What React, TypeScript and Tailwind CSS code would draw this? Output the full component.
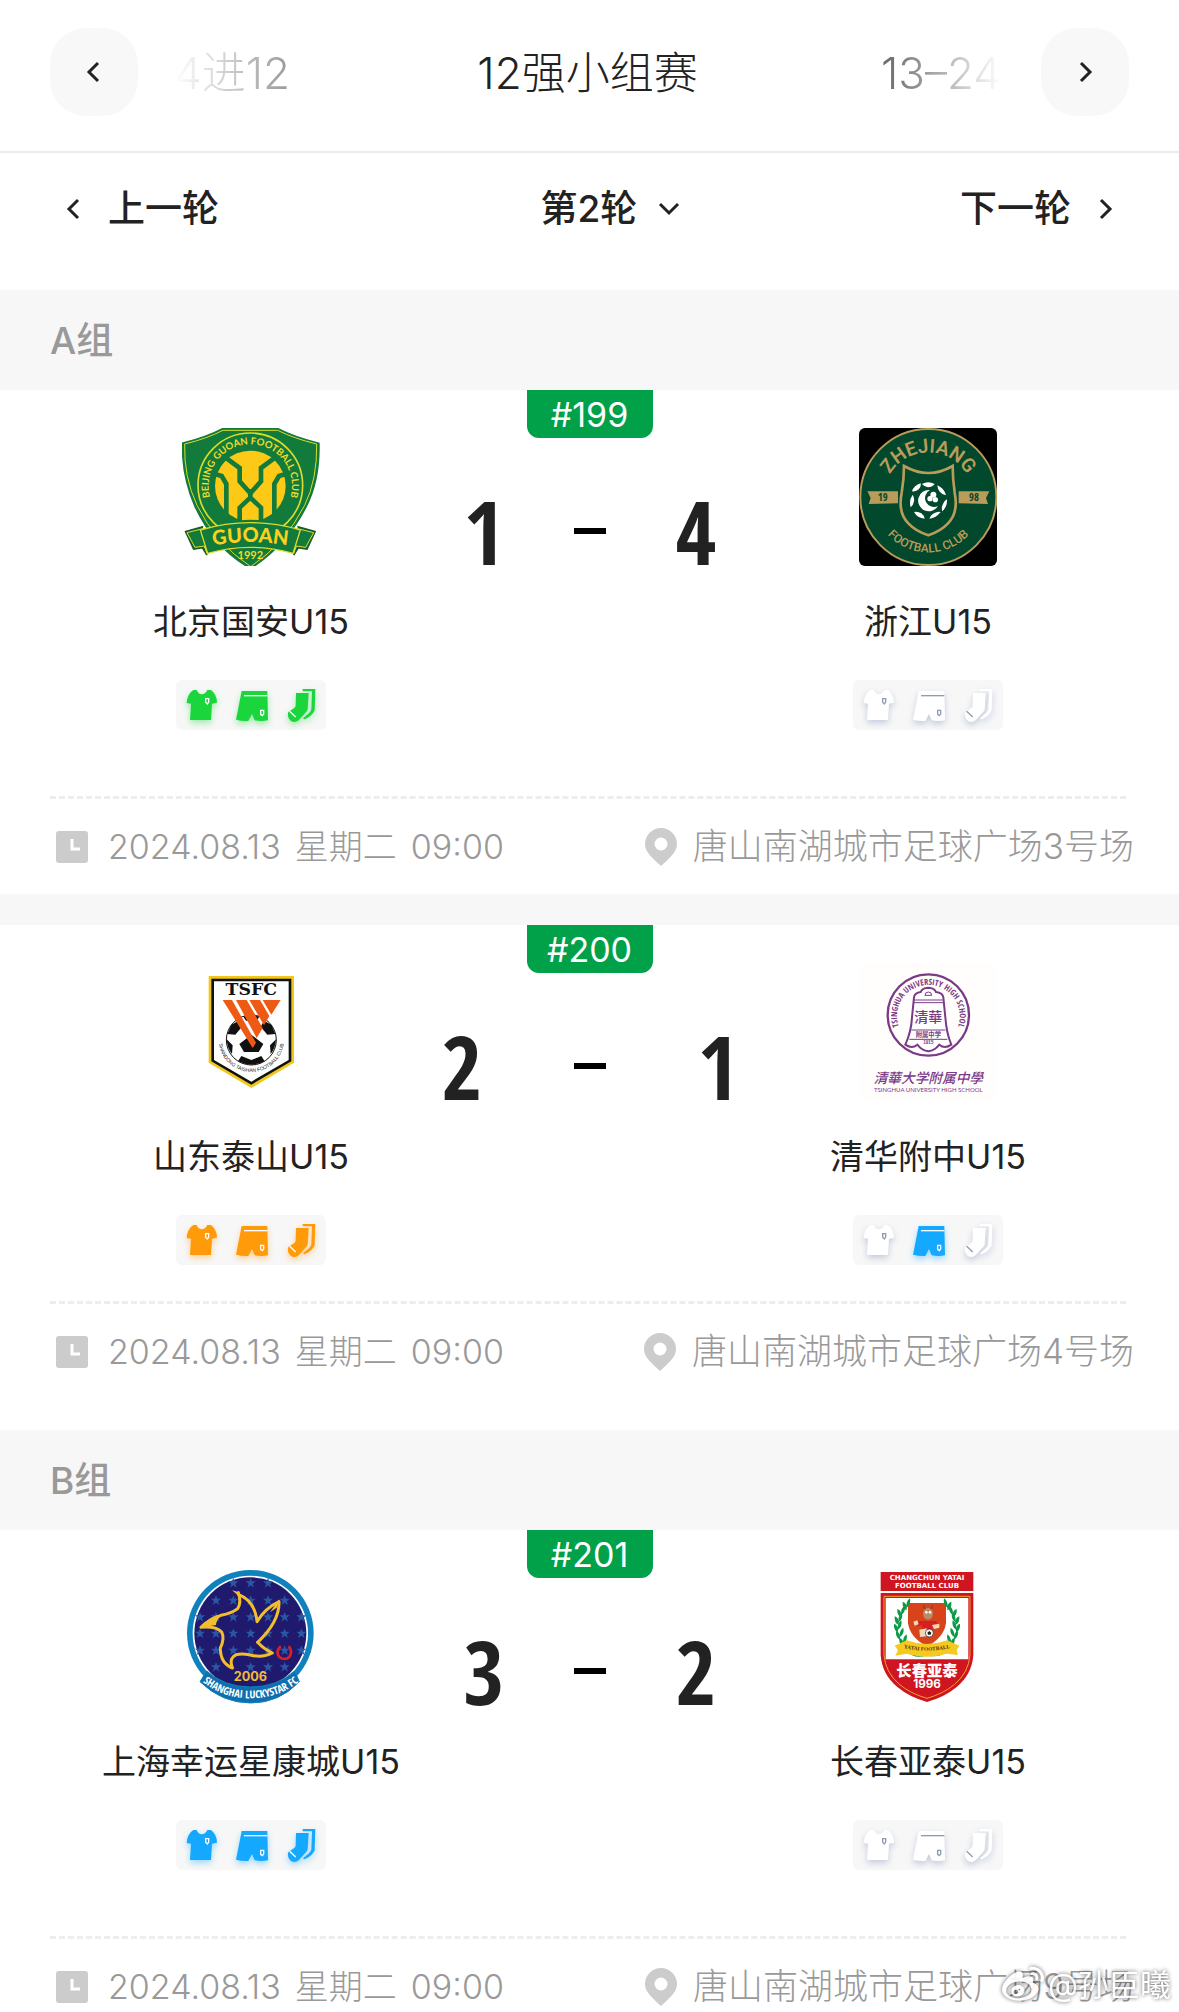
import React from 'react';
import { FaWeibo } from 'react-icons/fa';

type KitColor = 'green' | 'orange' | 'blue' | 'white';

interface Team {
  name: string;
  crest: React.FC;
  kit: [KitColor, KitColor, KitColor];
}

interface Match {
  id: string;
  home: Team;
  away: Team;
  score: [number, number];
  date: string;
  weekday: string;
  time: string;
  venue: string;
  scoreGap: string;
  detailGap: string;
}

const KIT_COLORS: Record<KitColor, { fill: string; mark: string; shadow: string }> = {
  green: { fill: '#1ad63c', mark: '#ffffff', shadow: 'drop-shadow-[0_3px_3px_rgba(26,214,60,0.4)]' },
  orange: { fill: '#ff9a0a', mark: '#ffffff', shadow: 'drop-shadow-[0_3px_3px_rgba(255,154,10,0.4)]' },
  blue: { fill: '#14a9ff', mark: '#ffffff', shadow: 'drop-shadow-[0_3px_3px_rgba(20,169,255,0.4)]' },
  white: { fill: '#ffffff', mark: '#8d9cb3', shadow: 'drop-shadow-[0_3px_3px_rgba(120,140,180,0.4)]' },
};

/* ---------- Icons ---------- */

const Chevron: React.FC<{ dir: 'left' | 'right' | 'down' }> = ({ dir }) => {
  if (dir === 'down') {
    return (
      <svg width="24" height="16" viewBox="0 0 24 16" fill="none" stroke="#222" strokeWidth="3" aria-hidden="true">
        <path d="M3 3l9 9 9-9" />
      </svg>
    );
  }
  return (
    <svg width="16" height="24" viewBox="0 0 16 24" fill="none" stroke="#222" strokeWidth="3" aria-hidden="true">
      <path d={dir === 'left' ? 'M12 3l-9 9 9 9' : 'M4 3l9 9-9 9'} />
    </svg>
  );
};

const ClockIcon = () => (
  <svg width="32" height="32" viewBox="0 0 32 32" className="shrink-0" aria-hidden="true">
    <rect width="32" height="32" rx="3" fill="#ccc" />
    <path d="M16 8v10h8" fill="none" stroke="#fff" strokeWidth="3" />
  </svg>
);

const PinIcon = () => (
  <svg width="32" height="38" viewBox="0 0 32 38" className="shrink-0" aria-hidden="true">
    <path fillRule="evenodd" fill="#ccc" d="M16 0a16 16 0 0 1 16 16c0 9-9 15-16 22C9 31 0 25 0 16A16 16 0 0 1 16 0zm0 9.500a6.500 6.500 0 1 0 0 13 6.500 6.500 0 0 0 0-13z" />
  </svg>
);

const Shirt: React.FC<{ color: KitColor }> = ({ color }) => {
  const c = KIT_COLORS[color];
  return (
    <svg width="36" height="40" viewBox="0 0 108 120" className={c.shadow} aria-hidden="true">
      <path fill={c.fill} d="M31 15h10q4 12 15 13 12-1 17-13h11q17 12 18 38l-15 3-3 49H21l3-49-13-2q2-28 20-39z" />
      <path fill="none" stroke={c.mark} strokeWidth="4" d="M68 41h9v10l-4 6-5-5z" />
    </svg>
  );
};

const Shorts: React.FC<{ color: KitColor }> = ({ color }) => {
  const c = KIT_COLORS[color];
  return (
    <svg width="36" height="40" viewBox="0 0 108 120" className={c.shadow} aria-hidden="true">
      <path fill={c.fill} d="M26 18h77l2 88q-20 4-40 0l-8-19-11 21q-20 1-37-4z" />
      <path fill="none" stroke={c.mark} strokeWidth="4" d="M33 32h70" />
      <path fill="none" stroke={c.mark} strokeWidth="4" d="M83 76h9v11l-4 5-5-4z" />
    </svg>
  );
};

const Socks: React.FC<{ color: KitColor }> = ({ color }) => {
  const c = KIT_COLORS[color];
  return (
    <svg width="36" height="40" viewBox="0 0 108 120" className={c.shadow} aria-hidden="true">
      <path fill={c.fill} d="M39 24h38l-3 48q-1 8-8 13L47 106q-12 9-24 1-12-10-7-26l18-12q4-3 4-8z" />
      <path fill={c.fill} d="M59 12h38l-2 64q-8 18-31 27l-4-3 18-15q6-5 7-12l2-54H59z" />
      <path fill="none" stroke={c.mark} strokeWidth="4" d="M20 79l18 17" />
    </svg>
  );
};

/* ---------- Club crests ---------- */

const GuoanCrest = () => (
  <svg width="138" height="138" viewBox="69 54 414 414" fontFamily="Lato, sans-serif" fontWeight="700" role="img" aria-label="北京国安">
    <path fill="#127a3a" d="M190 54h168q50 26 124 44 3 110-37 190-60 120-170 190Q165 418 106 290 66 200 68 98q72-18 122-44z" />
    <path fill="none" stroke="#d9dc2c" strokeWidth="3" d="M192 61h164q50 25 117 41 2 106-36 184-58 114-162 184Q170 400 114 286 74 200 77 102q66-16 115-41z" />
    <circle cx="274" cy="226" r="157" fill="#127a3a" stroke="#d9dc2c" strokeWidth="5" />
    <circle cx="274" cy="228" r="106" fill="#fcc917" />
    <g fill="none" stroke="#127a3a" strokeWidth="14">
      <path d="M196 140l46 34v40l32 36 32-36v-40l46-34" />
      <path d="M160 190l28 8 14 24v112M388 190l-28 8-14 24v112" />
      <path d="M242 345v-52l32-30 32 30v52M274 238v30" />
    </g>
    <path fill="#127a3a" d="M190 352v-16q30 10 50-4 34-6 68 0 20 14 50 4v16z" />
    <path id="guoan-ring" fill="none" d="M168 294A125 125 0 1 1 380 294" />
    <text fontSize="29" fill="#f0dc2a">
      <textPath href="#guoan-ring" startOffset="50%" textAnchor="middle">BEIJING GUOAN FOOTBALL CLUB</textPath>
    </text>
    <path fill="#127a3a" stroke="#1b5a2c" strokeWidth="5" d="M80 365l50-14-6 40 20 44-14-22-26 4zM468 365l-50-14 6 40-20 44 14-22 26 4z" />
    <path fill="#127a3a" stroke="#d9dc2c" strokeWidth="3" d="M84 368l48-12 12 74-8-22-28 4zM464 368l-48-12-12 74 8-22 28 4z" />
    <path fill="#127a3a" stroke="#d9dc2c" strokeWidth="4" d="M124 360q150-44 300 0l-22 70q-128-36-256 0z" />
    <path id="guoan-band" fill="none" d="M140 410q134-26 268 0" />
    <text fontSize="60" fontWeight="900" fill="#fcd01c">
      <textPath href="#guoan-band" startOffset="50%" textAnchor="middle">GUOAN</textPath>
    </text>
    <text x="274" y="446" fontSize="33" textAnchor="middle" fill="#f0dc2a">1992</text>
  </svg>
);

const ZhejiangCrest = () => (
  <svg width="138" height="138" viewBox="57 54 414 414" className="rounded-md" fontFamily="'Open Sans Condensed', sans-serif" fontWeight="700" role="img" aria-label="浙江">
    <rect x="57" y="54" width="414" height="414" fill="#000" />
    <circle cx="265" cy="261" r="204" fill="#02482d" stroke="#b99b5a" strokeWidth="6" />
    <path id="zj-top" fill="none" d="M144 204A134 134 0 0 1 386 204" />
    <text fontSize="58" fontWeight="600" fontFamily="Roboto, sans-serif" fill="#b99b5a">
      <textPath href="#zj-top" startOffset="50%" textAnchor="middle">ZHEJIANG</textPath>
    </text>
    <path id="zj-bottom" fill="none" d="M125 352A168 168 0 0 0 405 352" />
    <text fontSize="36" fill="#b99b5a" fontWeight="500" fontFamily="Roboto, sans-serif">
      <textPath href="#zj-bottom" startOffset="50%" textAnchor="middle">FOOTBALL CLUB</textPath>
    </text>
    <path fill="none" stroke="#b99b5a" strokeWidth="8" d="M192 168q74 42 146 0 0 40 6 80 12 60-20 92-20 22-59 36-40-14-60-36-32-32-20-92 7-40 7-80z" />
    <path fill="#b99b5a" d="M82 244h92v36l-88 2 6-18zM448 244h-92v36l88 2-6-18z" />
    <text x="128" y="273" fontSize="32" textAnchor="middle" fill="#02482d">19</text>
    <text x="402" y="273" fontSize="32" textAnchor="middle" fill="#02482d">98</text>
    <g fill="#fff">
      <path d="M246 222q18-10 38 0-8 10-20 10-12-2-18-10zM292 226q20 8 26 30-12-2-18-10-8-10-8-20zM321 268q2 20-14 36-4-12 2-22 4-10 12-14zM302 306q-14 18-34 20 4-12 14-16 10-6 20-4zM254 326q-22-2-32-20 12-2 22 4 8 6 10 16zM212 292q-6-22 6-38 6 10 4 20-2 12-10 18zM216 244q6-18 26-24 2 12-6 18-8 8-20 6z" />
      <path d="M270 240a32 32 0 1 0 24 48 24 24 0 1 1-24-48z" />
      <circle cx="280" cy="254" r="9" />
      <circle cx="270" cy="266" r="8" />
      <circle cx="286" cy="269" r="8" />
    </g>
  </svg>
);

const TaishanCrest = () => (
  <svg width="138" height="138" viewBox="6 39 414 414" role="img" aria-label="山东泰山">
    <path fill="#f2c71c" d="M86 78h256v260L214 414 86 338z" />
    <path fill="#111" d="M94 86h240v248l-120 70-120-70z" />
    <path fill="#fff" d="M102 94h224v236l-112 65-112-65z" />
    <text x="214" y="136" fontSize="52" fontWeight="700" fontFamily="'DejaVu Serif', serif" textAnchor="middle" fill="#111">TSFC</text>
    <circle cx="214" cy="270" r="75" fill="#fff" stroke="#111" strokeWidth="3" />
    <path fill="#111" d="M142 252l12-28 22-12 10 18-20 24zM286 252l-12-28-22-12-10 18 20 24zM178 282l36-28 36 28-14 24h-44zM140 268l18 18-2 26q-14-16-16-44zM288 268l-18 18 2 26q14-16 16-44zM184 318l30 12 30-12 10 16q-38 20-80 0zM190 200q24-8 48 0l-8 12h-32z" />
    <g fill="#ee5a14">
      <path d="M128 150h28l72 128-10 16z" />
      <path d="M168 150h32l48 84-18 30z" />
      <path d="M208 150h32l28 48-16 28z" />
      <path d="M248 150h54l-28 44z" />
    </g>
    <path id="ts-arc" fill="none" d="M116 268A98 98 0 0 0 312 268" />
    <text fontSize="15" fontFamily="'Liberation Sans', sans-serif" fill="#222">
      <textPath href="#ts-arc" startOffset="50%" textAnchor="middle">SHANDONG TAISHAN FOOTBALL CLUB</textPath>
    </text>
  </svg>
);

const TsinghuaCrest = () => (
  <svg width="138" height="138" viewBox="57 39 414 414" fill="#7a3a86" role="img" aria-label="清华附中">
    <rect x="57" y="39" width="414" height="414" fill="#fffefc" />
    <circle cx="265" cy="195" r="122" fill="none" stroke="#7a3a86" strokeWidth="7" />
    <path id="th-ring" fill="none" d="M192 258A94 94 0 1 1 338 258" />
    <text fontSize="25" fontWeight="700" fontFamily="'Open Sans Condensed', sans-serif">
      <textPath href="#th-ring" startOffset="50%" textAnchor="middle">TSINGHUA UNIVERSITY HIGH SCHOOL</textPath>
    </text>
    <path fill="#fff" stroke="#7a3a86" strokeWidth="6" d="M222 142q2-14 20-16 4-12 23-13 19 1 23 13 20 2 22 16l6 60q4 50 18 82-20 14-36 0-14 18-33 20-19-2-33-20-16 14-36 0 18-40 20-82z" />
    <path fill="none" stroke="#7a3a86" strokeWidth="3" d="M222 150h86M221 158h88M214 240h102M208 268h114M255 136a10 10 0 0 1 20 0z" />
    <text x="265" y="217" fontSize="42" fontWeight="500" textAnchor="middle" fontFamily="'Noto Sans CJK TC', sans-serif">清華</text>
    <text x="265" y="261" fontSize="19" fontWeight="700" textAnchor="middle" fontFamily="'Noto Sans CJK SC', sans-serif">附属中学</text>
    <text x="265" y="283" fontSize="14" fontWeight="700" textAnchor="middle" fontFamily="'Liberation Sans', sans-serif">1915</text>
    <text x="265" y="398" fontSize="41" fontWeight="500" fontStyle="italic" textAnchor="middle" fontFamily="'Noto Sans CJK TC', sans-serif">清華大学附属中學</text>
    <text x="265" y="426" fontSize="18" textAnchor="middle" fontFamily="Lato, sans-serif">TSINGHUA UNIVERSITY HIGH SCHOOL</text>
  </svg>
);

const STAR_POINTS = [
  [190, 96], [242, 96], [294, 96], [138, 148], [190, 148], [242, 148], [294, 148], [344, 148],
  [90, 198], [138, 198], [190, 198], [242, 198], [294, 198], [344, 198], [394, 198],
  [90, 247], [138, 247], [190, 247], [242, 247], [294, 247], [344, 247], [394, 247],
  [90, 298], [138, 298], [190, 298], [242, 298], [294, 298], [344, 298], [394, 298],
  [138, 348], [242, 348], [294, 348], [344, 348],
];

const LuckystarCrest = () => (
  <svg width="138" height="138" viewBox="36 51 414 414" role="img" aria-label="上海幸运星康城">
    <circle cx="241" cy="247" r="190" fill="#0f82bd" />
    <circle cx="241" cy="247" r="173" fill="#fff" />
    <circle cx="241" cy="247" r="168" fill="#1f1a6e" />
    {STAR_POINTS.map(([x, y]) => (
      <path key={`${x}-${y}`} fill="#2a56a4" d={`M${x} ${y - 15}l4 10h11l-9 8 4 11-10-7-10 7 4-11-9-8h11z`} />
    ))}
    <g fill="none" stroke="#f2bd2e" strokeWidth="9" strokeLinejoin="round" strokeLinecap="round">
      <path d="M205 125q10 28-2 48-18 14-50 20-40 14-60 36 44-4 62 14 10 20-4 48 0 46 36 60" />
      <path d="M205 130q50 20 56 82 24-40 66-60 2 60-64 122" />
      <path d="M263 274q18 20 44 32-30 16-66 6-40-8-52 6-10 10-2 32" />
    </g>
    <path fill="#f2bd2e" d="M88 230q30-36 70-42-20 20-20 34zM328 144l-8 26-20 14zM186 118l22 6 2 14z" />
    <path fill="none" stroke="#d8202a" strokeWidth="8" strokeLinecap="round" d="M330 288q-14 16-2 30 16 12 30 0 10-16 0-30" />
    <text x="241" y="391" fontSize="38" fontWeight="700" fontFamily="Inter, sans-serif" textAnchor="middle" fill="#f2bd2e">2006</text>
    <path fill="#0f6fae" stroke="#0f82bd" strokeWidth="3" d="M110 360q54 48 132 48t132-48l14 32q-60 64-146 64T90 392z" />
    <path id="lucky-band" fill="none" d="M84 380q64 62 158 62t158-62" />
    <text fontSize="32" fontWeight="700" fontFamily="'Open Sans Condensed', sans-serif" fill="#fff">
      <textPath href="#lucky-band" startOffset="50%" textAnchor="middle">SHANGHAI LUCKYSTAR FC</textPath>
    </text>
  </svg>
);

const LEAF_ROWS = [160, 182, 204, 226, 248, 268];

const YataiCrest = () => (
  <svg width="138" height="138" viewBox="27 51 414 414" role="img" aria-label="长春亚泰">
    <path fill="#cf151f" d="M92 63h278v57H92zM92 126h278v186q-4 58-50 96-36 30-89 45-53-15-89-45-46-38-50-96z" />
    <path fill="none" stroke="#f0a22c" strokeWidth="3" d="M102 136h258v176q-4 52-46 88-34 28-83 42-49-14-83-42-42-36-46-88z" />
    <path fill="#fff" d="M107 141h248v184H107z" />
    <g fontFamily="'DejaVu Sans', sans-serif" fontWeight="700" fontSize="21" fill="#fff" textAnchor="middle">
      <text x="231" y="88">CHANGCHUN YATAI</text>
      <text x="231" y="110">FOOTBALL CLUB</text>
    </g>
    <path fill="#d8431c" d="M174 156h114v60q-6 44-57 70-51-26-57-70z" />
    <g fill="#0d9a48">
      {LEAF_ROWS.map((y, i) => {
        const dx = [28, 12, 4, 2, 8, 18][i];
        return (
          <g key={y}>
            <path d={`M${130 + dx} ${y - 8}q14 4 12 26-14-6-12-26zM${152 + dx} ${y - 18}q4 18-10 28-4-18 10-28z`} />
            <path d={`M${332 - dx} ${y - 8}q-14 4-12 26 14-6 12-26zM${310 - dx} ${y - 18}q-4 18 10 28 4-18-10-28z`} />
          </g>
        );
      })}
      <path d="M176 304q30-2 54 6 24-8 54-6-12 16-54 10-40 10-54-10z" />
    </g>
    <path fill="#d6201f" d="M208 210h50l8 12-12 8-6-8v24h-32v-24l-12 4-8-8z" />
    <path fill="#f4d9b5" d="M190 212l12-4 4 12-12 4zM246 222l22-4v12l-16 4zM208 236l22-4v24l-20 2z" />
    <ellipse cx="234" cy="188" rx="15" ry="18" fill="#b98a64" />
    <path fill="none" stroke="#6b3b20" strokeWidth="3" d="M226 174l-6-10M242 174l6-10" />
    <circle cx="229" cy="184" r="4" fill="#fff" />
    <circle cx="240" cy="184" r="4" fill="#fff" />
    <circle cx="238" cy="246" r="12" fill="#fff" stroke="#222" strokeWidth="2" />
    <path fill="#222" d="M238 240l6 5-2 6h-8l-2-6z" />
    <path fill="#f6c91f" d="M134 284l36-16q60 22 122 0l36 16-8 14 4 14-34-4q-60 18-120 0l-34 6 8-16z" />
    <path id="yatai-band" fill="none" d="M158 290q73 18 146 0" />
    <text fontSize="16" fontWeight="700" fontFamily="'Liberation Serif', serif" fill="#5a2a10">
      <textPath href="#yatai-band" startOffset="50%" textAnchor="middle">YATAI FOOTBALL</textPath>
    </text>
    <text x="231" y="374" fontSize="46" fontWeight="900" fontFamily="'Noto Sans CJK SC', sans-serif" textAnchor="middle" fill="#fff">长春亚泰</text>
    <text x="231" y="412" fontSize="35" fontWeight="700" fontFamily="Inter, sans-serif" textAnchor="middle" fill="#fff">1996</text>
  </svg>
);

/* ---------- Data ---------- */

const GROUPS: { name: string; matches: Match[] }[] = [
  {
    name: 'A组',
    matches: [
      {
        id: '#199',
        home: { name: '北京国安U15', crest: GuoanCrest, kit: ['green', 'green', 'green'] },
        away: { name: '浙江U15', crest: ZhejiangCrest, kit: ['white', 'white', 'white'] },
        score: [1, 4],
        date: '2024.08.13',
        weekday: '星期二',
        time: '09:00',
        venue: '唐山南湖城市足球广场3号场',
        scoreGap: 'gap-[70px]',
        detailGap: 'mt-[66px]',
      },
      {
        id: '#200',
        home: { name: '山东泰山U15', crest: TaishanCrest, kit: ['orange', 'orange', 'orange'] },
        away: { name: '清华附中U15', crest: TsinghuaCrest, kit: ['white', 'blue', 'white'] },
        score: [2, 1],
        date: '2024.08.13',
        weekday: '星期二',
        time: '09:00',
        venue: '唐山南湖城市足球广场4号场',
        scoreGap: 'gap-[92px]',
        detailGap: 'mt-9',
      },
    ],
  },
  {
    name: 'B组',
    matches: [
      {
        id: '#201',
        home: { name: '上海幸运星康城U15', crest: LuckystarCrest, kit: ['blue', 'blue', 'blue'] },
        away: { name: '长春亚泰U15', crest: YataiCrest, kit: ['white', 'white', 'white'] },
        score: [3, 2],
        date: '2024.08.13',
        weekday: '星期二',
        time: '09:00',
        venue: '唐山南湖城市足球广场9号场',
        scoreGap: 'gap-[70px]',
        detailGap: 'mt-[66px]',
      },
    ],
  },
];

/* ---------- Layout ---------- */

const TeamColumn: React.FC<{ team: Team }> = ({ team }) => {
  const Crest = team.crest;
  return (
    <div className="flex flex-col items-center pt-[38px]">
      <Crest />
      <div className="mt-8 text-[34px] leading-12 whitespace-nowrap">{team.name}</div>
      <div className="mt-[34px] grid h-[50px] w-[150px] grid-cols-3 place-items-center rounded-md bg-[#f7f7f7]">
        <Shirt color={team.kit[0]} />
        <Shorts color={team.kit[1]} />
        <Socks color={team.kit[2]} />
      </div>
    </div>
  );
};

const MatchCard: React.FC<{ match: Match }> = ({ match }) => (
  <article className="bg-white">
    <div className="grid grid-cols-[1fr_315px_1fr] px-[70px]">
      <TeamColumn team={match.home} />
      <div className="flex flex-col items-center">
        <div className="flex h-12 w-[126px] items-center justify-center rounded-b-xl bg-[#00a149] text-[34px] text-white">
          {match.id}
        </div>
        <div className={`mt-[49px] flex items-center text-[88px] leading-[88px] font-bold font-['Open_Sans_Condensed','Open_Sans',sans-serif] ${match.scoreGap}`}>
          <span className="w-10 text-center">{match.score[0]}</span>
          <span className="h-[6px] w-8 bg-black" />
          <span className="w-10 text-center">{match.score[1]}</span>
        </div>
      </div>
      <TeamColumn team={match.away} />
    </div>
    <div className={`mr-[53px] ml-[50px] border-t-[3px] border-dashed border-[#ededed] ${match.detailGap}`} />
    <div className="flex h-[95px] items-center justify-between pr-[45px] pl-14 font-light text-[#999]">
      <div className="flex items-center">
        <ClockIcon />
        <div className="ml-5 flex gap-[14px] text-[34px]">
          <span>{match.date}</span>
          <span>{match.weekday}</span>
          <span>{match.time}</span>
        </div>
      </div>
      <div className="flex items-center gap-4 text-[35px] whitespace-nowrap">
        <PinIcon />
        <span>{match.venue}</span>
      </div>
    </div>
  </article>
);

export default function App() {
  return (
    <div className="relative h-screen overflow-hidden bg-white text-[#222] font-[Inter,'Noto_Sans_CJK_SC',sans-serif]">
      {/* Stage switcher */}
      <header className="flex items-center border-b-2 border-[#ebebeb] px-[50px] pt-7 pb-[35px]">
        <button aria-label="上一阶段" className="flex size-[88px] items-center justify-center rounded-[36px] bg-[#f8f8f8]">
          <Chevron dir="left" />
        </button>
        <div className="grid flex-1 grid-cols-[1fr_auto_1fr] items-center pt-[2px] pr-10 pl-9 text-[44px] leading-14 font-light">
          <button className="justify-self-start bg-linear-to-r from-white to-[#999] bg-clip-text text-transparent">4进12</button>
          <button>12强小组赛</button>
          <button className="justify-self-end bg-linear-to-r from-[#666] to-white bg-clip-text text-transparent">13–24</button>
        </div>
        <button aria-label="下一阶段" className="flex size-[88px] items-center justify-center rounded-[36px] bg-[#f8f8f8]">
          <Chevron dir="right" />
        </button>
      </header>

      {/* Round switcher */}
      <nav className="grid grid-cols-[1fr_auto_1fr] px-[66px] pt-7 pb-[53px] text-[37px] leading-14 font-medium">
        <button className="flex items-center gap-[26px] justify-self-start">
          <Chevron dir="left" />
          上一轮
        </button>
        <div className="relative">
          <select aria-label="轮次" defaultValue="2" className="appearance-none bg-transparent">
            <option value="1">第1轮</option>
            <option value="2">第2轮</option>
            <option value="3">第3轮</option>
          </select>
          <span className="pointer-events-none absolute inset-y-0 left-full ml-[18px] flex items-center">
            <Chevron dir="down" />
          </span>
        </div>
        <button className="flex items-center gap-[26px] justify-self-end">
          下一轮
          <Chevron dir="right" />
        </button>
      </nav>

      {GROUPS.map((group, i) => (
        <section key={group.name}>
          <h2 className={`flex h-[100px] items-center bg-[#f7f7f7] px-[50px] pt-[2px] text-[37px] font-medium text-[#999] ${i > 0 ? 'mt-[31px]' : ''}`}>
            {group.name}
          </h2>
          <div className="flex flex-col gap-[31px] bg-[#f7f7f7]">
            {group.matches.map((match) => (
              <MatchCard key={match.id} match={match} />
            ))}
          </div>
        </section>
      ))}

      {/* Watermark */}
      <div className="absolute right-2 bottom-1 flex items-center text-[31px] text-white opacity-90 drop-shadow-[0_0_2px_rgba(0,0,0,0.7)]">
        <FaWeibo size={42} />
        <span className="ml-1">@孙臣曦</span>
      </div>
    </div>
  );
}
